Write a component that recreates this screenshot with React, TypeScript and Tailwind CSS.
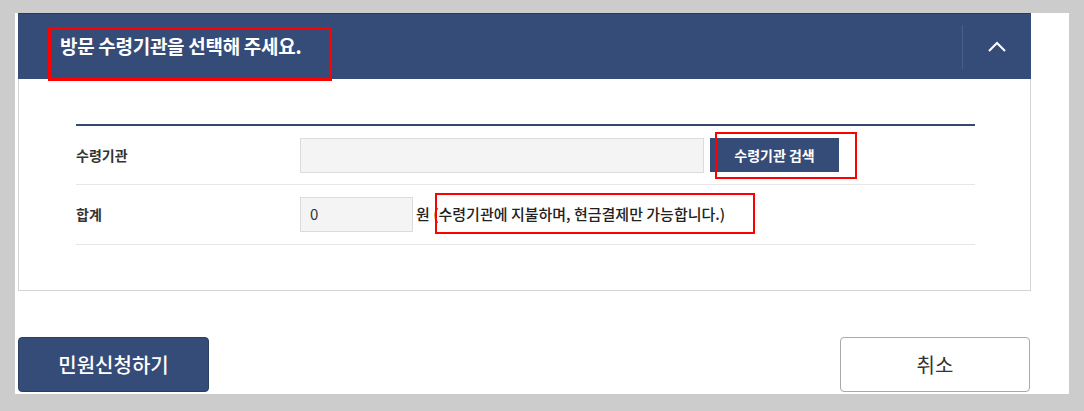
import React from "react";

export default function App() {
  return (
    <div className="relative w-[1084px] h-[411px] bg-[#cccccc] pt-[15px] pl-[15px] font-['Noto_Sans_CJK_KR','Malgun_Gothic',sans-serif] overflow-hidden">
      <div className="w-[1054px] h-[381px] bg-white">
        <div className="ml-[3px] -mt-[2px] w-[1013px]">
          {/* header */}
          <div className="flex items-center h-[66px] bg-[#354c78] border-t border-[#28395a]">
            <div className="flex-1 pl-[42px] text-white text-[19px] font-bold tracking-[-0.3px]">
              방문 수령기관을 선택해 주세요.
            </div>
            <div className="w-px h-[44px] bg-[#4a5f89]" />
            <div className="w-[68px] flex items-center justify-center">
              <svg width="18" height="11" viewBox="0 0 18 11" fill="none">
                <polyline points="1,10 9,2 17,10" stroke="white" strokeWidth="2" />
              </svg>
            </div>
          </div>
          {/* body */}
          <div className="border-x border-b border-[#d4d4d4] pt-[45px] pl-[57px] pr-[55px] pb-[45px]">
            <div className="border-t-2 border-[#34496f]">
              <div className="flex items-center h-[59px] border-b border-[#e6e6e6]">
                <div className="w-[224px] text-[14px] font-bold text-[#333]">수령기관</div>
                <div className="w-[404px] h-[35px] bg-[#f4f4f4] border border-[#dcdcdc]" />
                <div className="ml-[6px] w-[129px] h-[34px] bg-[#354c78] text-white text-[14px] font-bold flex items-center justify-center">
                  수령기관 검색
                </div>
              </div>
              <div className="flex items-center h-[60px] border-b border-[#e6e6e6]">
                <div className="w-[224px] text-[14px] font-bold text-[#333]">합계</div>
                <div className="w-[113px] h-[35px] bg-[#f4f4f4] border border-[#dcdcdc] pl-[9px] flex items-center text-[15px] text-[#333]">
                  0
                </div>
                <div className="ml-[3px] text-[15px] font-medium text-[#222]">
                  원 (수령기관에 지불하며, 현금결제만 가능합니다.)
                </div>
              </div>
            </div>
          </div>
          {/* buttons */}
          <div className="flex justify-between w-[1012px] mt-[46px]">
            <div className="w-[191px] h-[55px] rounded-[4px] bg-[#354c78] border border-[#2c3f63] text-white text-[20px] font-medium flex items-center justify-center">
              민원신청하기
            </div>
            <div className="w-[190px] h-[55px] rounded-[4px] bg-white border border-[#aaaaaa] text-[#333] text-[20px] flex items-center justify-center">
              취소
            </div>
          </div>
        </div>
      </div>
      {/* red annotation boxes */}
      <div className="absolute left-[48px] top-[27px] w-[284px] h-[54px] border-[3px] border-[#ff0000]" />
      <div className="absolute left-[715px] top-[132px] w-[142px] h-[47px] border-[2px] border-[#ff0000]" />
      <div className="absolute left-[435px] top-[193px] w-[320px] h-[41px] border-[2px] border-[#ff0000]" />
    </div>
  );
}
